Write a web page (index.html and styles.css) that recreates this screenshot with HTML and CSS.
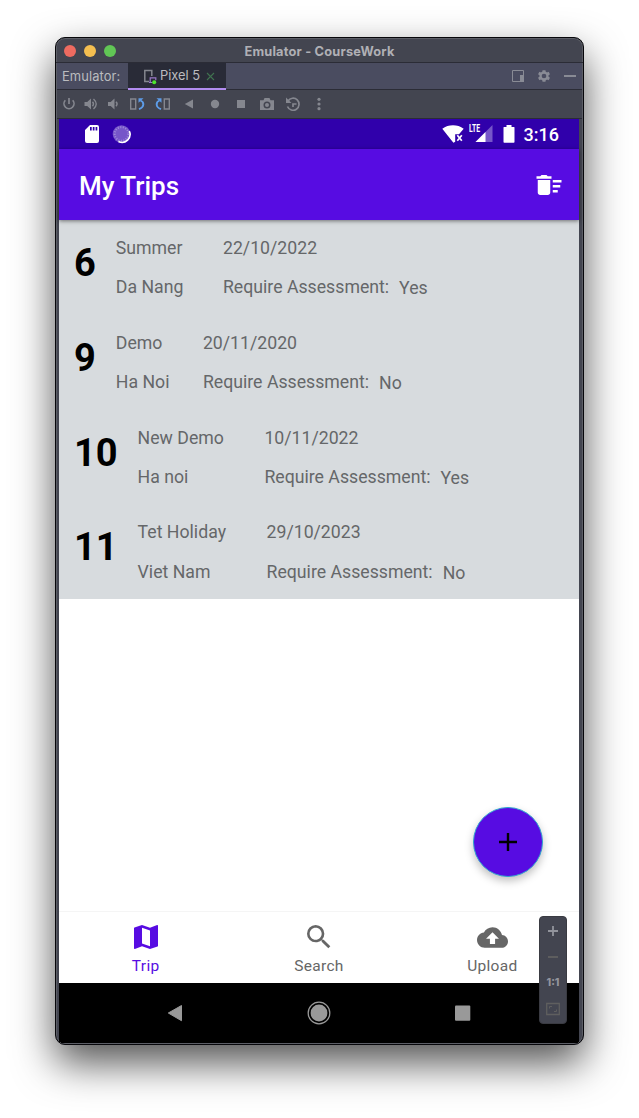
FILE: index.html
```html
<!DOCTYPE html>
<html lang="en">
<head>
<meta charset="utf-8">
<title>Emulator - CourseWork</title>
<link rel="stylesheet" href="styles.css">
</head>
<body>
<main class="window">
  <header class="titlebar">
    <div class="lights"><i class="light red"></i><i class="light yellow"></i><i class="light green"></i></div>
    <span class="window-title">Emulator - CourseWork</span>
  </header>
  <div class="tabs">
    <span class="tabs-label">Emulator:</span>
    <div class="tab">
      <svg class="tab-device" width="14" height="16" viewBox="0 0 14 16"><path d="M6 12.500H1.800V1.500h7V7" fill="none" stroke="#85878f" stroke-width="1.500"/><path d="M7.200 13V8.800h5.600v2.500M6 13.500h3" fill="none" stroke="#9a78c8" stroke-width="1.200"/><circle cx="11.200" cy="13.200" r="2" fill="#4ee62e"/></svg>
      <span class="tab-name">Pixel 5</span>
      <svg class="tab-close" width="9" height="9" viewBox="0 0 9 9"><path d="M1 1l7 7M8 1L1 8" stroke="#40724f" stroke-width="1.100"/></svg>
    </div>
    <div class="tab-actions">
      <svg width="14" height="14" viewBox="0 0 14 14"><path d="M1.500 1.500h11v11h-11z" fill="none" stroke="#898b95"/><path d="M9 6h4v7H9z" fill="#898b95"/></svg>
      <svg width="14" height="14" viewBox="0 0 24 24"><path fill="#898b95" fill-rule="evenodd" d="M19.800 13.200c.1-.8.1-1.600 0-2.400l2.400-1.900-2.300-4-2.800 1.200a9 9 0 0 0-2.100-1.200L14.500 2h-5L9 4.900a9 9 0 0 0-2.100 1.200L4.100 4.900l-2.300 4 2.400 1.900c-.1.800-.1 1.600 0 2.400l-2.400 1.900 2.300 4 2.800-1.200c.7.500 1.400.9 2.100 1.200l.5 2.900h5l.5-2.900c.8-.3 1.500-.7 2.100-1.200l2.800 1.200 2.300-4zM12 16a4 4 0 1 1 0-8 4 4 0 0 1 0 8z"/></svg>
      <svg width="14" height="14" viewBox="0 0 14 14"><path d="M1 6h12v2H1z" fill="#898b95"/></svg>
    </div>
  </div>
  <div class="toolbar">
    <div class="tools-audio">
      <svg width="20" height="20" viewBox="0 0 20 20"><path d="M10 4v6M6.300 6.300a5 5 0 1 0 7.400 0" fill="none" stroke="#85878f" stroke-width="1.700"/></svg>
      <svg width="20" height="20" viewBox="0 0 20 20"><path d="M3.500 8h2.700L10 4.500v11L6.200 12H3.500z" fill="#85878f"/><path d="M11.500 7.800q2 2.200 0 4.400M12.500 5q5.500 5 0 10" fill="none" stroke="#85878f" stroke-width="1.400"/></svg>
      <svg width="20" height="20" viewBox="0 0 20 20"><path d="M5 8h2.700l3.800-3.500v11L7.700 12H5z" fill="#85878f"/><path d="M13 7.800q2.200 2.200 0 4.400" fill="none" stroke="#85878f" stroke-width="1.400"/></svg>
    </div>
    <div class="tools-device">
      <svg width="20" height="20" viewBox="0 0 20 20"><path d="M3.700 5h5v10h-5z" fill="none" stroke="#85878f" stroke-width="1.400"/><path d="M12 15.200c5.500-2 5.500-7 1.500-8.700" fill="none" stroke="#5d9ce8" stroke-width="1.900"/><path d="M11.500 4.200h5l-5 4.500z" fill="#5d9ce8"/></svg>
      <svg width="20" height="20" viewBox="0 0 20 20"><path d="M11.300 5h5v10h-5z" fill="none" stroke="#85878f" stroke-width="1.400"/><path d="M8 15.200c-5.500-2-5.500-7-1.500-8.700" fill="none" stroke="#5d9ce8" stroke-width="1.900"/><path d="M8.500 4.200h-5l5 4.500z" fill="#5d9ce8"/></svg>
      <svg width="20" height="20" viewBox="0 0 20 20"><path d="M14 5.500v9L5.800 10z" fill="#85878f"/></svg>
      <svg width="20" height="20" viewBox="0 0 20 20"><circle cx="10" cy="10" r="4.200" fill="#85878f"/></svg>
      <svg width="20" height="20" viewBox="0 0 20 20"><path d="M6 6h8v8H6z" fill="#85878f"/></svg>
      <svg width="20" height="20" viewBox="0 0 20 20"><path fill="#85878f" fill-rule="evenodd" d="M3 6.300h3.500L7.500 4h5l1 2.300H17V16H3zM10 7.500a3.500 3.500 0 1 0 0 7 3.500 3.500 0 0 0 0-7z"/><circle cx="10" cy="11" r="2" fill="#85878f"/></svg>
      <svg width="20" height="20" viewBox="0 0 20 20"><path d="M5 7a6 6 0 1 1-.5 5.500M10 13V10h3.500" fill="none" stroke="#85878f" stroke-width="1.700"/><path d="M3 3.500V9h5.500z" fill="#85878f"/></svg>
      <svg width="20" height="20" viewBox="0 0 20 20" fill="#85878f"><circle cx="10" cy="5.300" r="1.600"/><circle cx="10" cy="10" r="1.600"/><circle cx="10" cy="14.700" r="1.600"/></svg>
    </div>
  </div>

  <section class="screen">
    <div class="status">
      <div class="status-left">
        <svg width="16" height="20" viewBox="0 0 16 20"><path fill="#fff" fill-rule="evenodd" d="M6 1h7q2 0 2 2v14q0 2-2 2H3q-2 0-2-2V6zM6 3v3.500h1.700V3zm2.800 0v3.500h1.700V3zm2.800 0v3.500h1.700V3z"/></svg>
        <svg width="20" height="20" viewBox="0 0 20 20"><circle cx="9.500" cy="10" r="8.800" fill="#7656c9"/><circle cx="9.500" cy="10" r="6.800" fill="none" stroke="#a18bdb" stroke-width="2" stroke-dasharray="1 1.550"/><path d="M17.300 7A8 8 0 0 1 6.500 17.500" fill="none" stroke="#fff" stroke-width="1.600"/></svg>
      </div>
      <div class="status-right">
        <svg width="24" height="20" viewBox="0 0 24 20"><path fill="#fff" d="M1.300 4.700C7.500.2 16.500.2 22.700 4.700L18 10.200h-3.800v7.600l-1.800 1z"/><path d="M16.300 11.300l4.500 5.500M20.800 11.300l-4.500 5.500" stroke="#fff" stroke-width="1.700"/></svg>
        <div class="cell"><span class="lte">LTE</span><svg width="18" height="18" viewBox="0 0 18 18"><path d="M17.500 0v17H.5z" fill="#7656c9"/><path d="M10.500 7v10H.5z" fill="#fff"/></svg></div>
        <svg width="12" height="20" viewBox="0 0 12 20"><path fill="#fff" d="M3.500 1h5v2H11q.5 0 .5.600V18q0 .800-.800.800H1.300Q.5 18.800.5 18V3.600Q.5 3 1 3h2.500z"/></svg>
        <span class="clock">3:16</span>
      </div>
    </div>
    <div class="appbar">
      <h1 class="app-title">My Trips</h1>
      <svg class="delete-all" width="30" height="30" viewBox="0 0 24 24"><path fill="#fff" d="M15 16h4v2h-4zm0-8h7v2h-7zm0 4h6v2h-6zM3 18c0 1.100.9 2 2 2h6c1.100 0 2-.9 2-2V8H3zM14 5h-3l-1-1H6L5 5H2v2h12z"/></svg>
    </div>
    <div class="trips">
      <article class="trip"><b class="trip-id">6</b><div class="place"><span>Summer</span><span class="city">Da Nang</span></div><div class="detail"><span>22/10/2022</span><span class="assess">Require Assessment:<em>Yes</em></span></div></article>
      <article class="trip"><b class="trip-id">9</b><div class="place"><span>Demo</span><span class="city">Ha Noi</span></div><div class="detail"><span>20/11/2020</span><span class="assess">Require Assessment:<em>No</em></span></div></article>
      <article class="trip"><b class="trip-id">10</b><div class="place"><span>New Demo</span><span class="city">Ha noi</span></div><div class="detail"><span>10/11/2022</span><span class="assess">Require Assessment:<em>Yes</em></span></div></article>
      <article class="trip"><b class="trip-id">11</b><div class="place"><span>Tet Holiday</span><span class="city">Viet Nam</span></div><div class="detail"><span>29/10/2023</span><span class="assess">Require Assessment:<em>No</em></span></div></article>
    </div>
    <div class="blank"></div>
    <nav class="bottom-nav">
      <div class="nav-item active"><svg width="32" height="32" viewBox="0 0 24 24"><path fill="currentColor" d="M20.500 3l-.160.030L15 5.100 9 3 3.360 4.900c-.210.070-.360.250-.360.480V20.500c0 .280.220.500.500.500l.160-.030L9 18.900l6 2.100 5.640-1.900c.210-.070.360-.250.360-.480V3.500c0-.280-.220-.500-.500-.500zM15 19l-6-2.110V5l6 2.110V19z"/></svg><span>Trip</span></div>
      <div class="nav-item"><svg width="32" height="32" viewBox="0 0 24 24"><path fill="currentColor" d="M15.500 14h-.790l-.280-.270A6.470 6.470 0 0 0 16 9.500 6.500 6.500 0 1 0 9.500 16c1.610 0 3.090-.590 4.230-1.570l.270.280v.790l5 4.990L20.490 19l-4.990-5zm-6 0C7.010 14 5 11.990 5 9.500S7.010 5 9.500 5 14 7.010 14 9.500 11.990 14 9.500 14z"/></svg><span>Search</span></div>
      <div class="nav-item upload"><svg width="31" height="31" viewBox="0 0 24 24"><path fill="currentColor" d="M19.350 10.040C18.670 6.590 15.640 4 12 4 9.110 4 6.600 5.640 5.350 8.040 2.340 8.360 0 10.910 0 14c0 3.310 2.690 6 6 6h13c2.760 0 5-2.240 5-5 0-2.640-2.050-4.780-4.650-4.960zM14 13v4h-4v-4H7l5-5 5 5h-3z"/></svg><span>Upload</span></div>
    </nav>
    <div class="system-nav">
      <svg width="36" height="36" viewBox="0 0 36 36"><path d="M24.500 10.500v15.200L11.300 18z" fill="#999" stroke="#999" stroke-linejoin="round"/></svg>
      <svg width="36" height="36" viewBox="0 0 36 36"><circle cx="18" cy="18" r="10.800" fill="none" stroke="#999" stroke-width="1.300"/><circle cx="18" cy="18" r="8.400" fill="#999"/></svg>
      <svg width="36" height="36" viewBox="0 0 36 36"><rect x="10" y="10.500" width="15.300" height="15.200" rx="1" fill="#999"/></svg>
    </div>
    <button class="fab" aria-label="Add trip"><svg width="20" height="20" viewBox="0 0 20 20"><path d="M10 1v18M1 10h18" stroke="#000" stroke-width="2.400"/></svg></button>
    <div class="zoom-panel">
      <svg width="14" height="14" viewBox="0 0 14 14"><path d="M7 2v10M2 7h10" stroke="#92949c" stroke-width="1.800"/></svg>
      <svg width="14" height="14" viewBox="0 0 14 14"><path d="M2 7h10" stroke="#5f5f5f" stroke-width="1.900"/></svg>
      <span class="ratio">1:1</span>
      <svg width="14" height="14" viewBox="0 0 14 14"><path d="M.7 1.500h12.600v11H.7z" fill="none" stroke="#5f5f5f" stroke-width="1.300"/><path d="M3.500 6.500V4.500H6M10.500 7.500v2H8" fill="none" stroke="#5f5f5f"/></svg>
    </div>
  </section>
</main>
</body>
</html>
```
FILE: styles.css
```css
* { box-sizing: border-box; }
body {
  margin: 0;
  width: 639px;
  height: 1118px;
  padding: 37px 0 0 55px;
  background: #fff;
  overflow: hidden;
  font-family: Roboto, sans-serif;
}
svg { display: block; flex: none; }

.window {
  width: 529px;
  height: 1008px;
  border: 1px solid #07070b;
  border-radius: 10px;
  background: #434550;
  box-shadow: 0 18px 40px rgba(0, 0, 0, .68), inset 0 0 0 1px #5c5e66;
  display: flex;
  flex-direction: column;
  overflow: hidden;
  font-family: Inter, sans-serif;
}
.titlebar {
  height: 25px;
  display: grid;
  grid-template-columns: 100px 1fr 100px;
  align-items: center;
  padding-top: 2px;
  border-bottom: 1px solid #2b2c36;
}
.lights { display: flex; gap: 8px; padding-left: 8px; }
.light { width: 12px; height: 12px; border-radius: 50%; }
.red { background: #ee6b60; }
.yellow { background: #f5bf50; }
.green { background: #61c655; }
.window-title { text-align: center; font-size: 12.8px; font-weight: 700; letter-spacing: .2px; color: #b0b0b5; white-space: nowrap; }

.tabs {
  height: 27px;
  margin: 0 1px;
  display: flex;
  align-items: center;
  background: #4a4c60;
  border-bottom: 1px solid #2b2c36;
}
.tabs-label { width: 71px; padding-left: 5px; font-size: 12.9px; letter-spacing: .1px; color: #bbbcbf; }
.tab {
  align-self: stretch;
  margin-bottom: -1px;
  width: 98px;
  display: flex;
  align-items: center;
  padding-left: 15px;
  background: #292b37;
  border-bottom: 2px solid #b28cf0;
}
.tab-device { margin-top: 2px; }
.tab-name { margin-left: 3px; width: 46px; font-size: 12.9px; color: #bbbcbf; white-space: nowrap; }
.tab-close { margin: 1px 0 0; }
.tab-actions { display: flex; gap: 12px; margin-left: auto; padding-right: 5px; }

.toolbar {
  height: 29px;
  display: flex;
  align-items: center;
  gap: 4px;
  padding: 0 0 1px 2px;
  border-bottom: 1px solid #2b2c36;
  margin: 0 1px;
}
.tools-audio { display: flex; gap: 2px; }
.tools-device { display: flex; gap: 6px; }

.screen {
  position: relative;
  width: 520px;
  height: 924px;
  margin-left: 3px;
  display: flex;
  flex-direction: column;
  background: #fff;
  font-family: Roboto, sans-serif;
}
.status {
  height: 30px;
  display: flex;
  justify-content: space-between;
  align-items: center;
  background: #3000ab;
  color: #fff;
}
.status-left { display: flex; gap: 12px; padding-left: 25px; }
.status-right { display: flex; align-items: center; padding-right: 20px; }
.cell { display: flex; align-items: center; margin: 0 10px 0 4px; }
.lte { width: 6px; font: 700 10px/10px Roboto, sans-serif; transform: scaleX(.68); transform-origin: left; margin-top: -10px; }
.clock { width: 36px; margin-left: 8px; font-size: 18px; font-weight: 500; text-align: right; padding-top: 1px; }
.appbar {
  position: relative;
  z-index: 1;
  height: 71px;
  display: flex;
  align-items: center;
  justify-content: space-between;
  padding: 1px 15px 0 20px;
  background: #570ce2;
  color: #fff;
  box-shadow: 0 1px 4px rgba(0, 0, 0, .5);
}
.app-title { margin: 0; padding-top: 2px; font-size: 26px; font-weight: 500; }

.trips { height: 379px; background: #d7dbde; }
.trip { height: 94.75px; display: flex; padding: 16px 0 0 15px; color: #656769; font-size: 17.7px; line-height: 24px; }
.trip-id { margin-right: 20px; padding-top: 3px; font-size: 38px; line-height: 48px; color: #000; font-weight: 700; }
.place, .detail { display: flex; flex-direction: column; gap: 15.300px; white-space: nowrap; }
.place { margin-right: 40.500px; }
.city { width: 0; }
.assess em { display: inline-block; margin-left: 10px; font-style: normal; transform: translateY(1px); }

.blank { height: 312px; }
.bottom-nav {
  height: 72px;
  display: grid;
  grid-template-columns: repeat(3, 1fr);
  border-top: 1px solid #f5f5f5;
  background: #fff;
}
.nav-item { display: flex; flex-direction: column; align-items: center; padding-top: 9px; color: #666; font-size: 15.5px; line-height: 20px; letter-spacing: .3px; }
.nav-item span { margin-top: 3px; }
.upload svg { margin: 1px 0 0; }
.upload span { margin-top: 3px; }
.active { color: #570ce2; }
.system-nav { height: 60px; display: flex; justify-content: center; align-items: center; gap: 108px; background: #000; }

.fab {
  position: absolute;
  right: 36px;
  top: 687.500px;
  width: 70px;
  height: 70px;
  padding: 0;
  border: 1px solid #2fa5cf;
  border-radius: 50%;
  background: #570ce2;
  display: grid;
  place-items: center;
  box-shadow: 0 4px 9px rgba(0, 0, 0, .25);
}
.zoom-panel {
  position: absolute;
  right: 12px;
  top: 797px;
  width: 28px;
  height: 108px;
  padding: 7px 0;
  border-radius: 4px;
  background: #434550;
  border: 1px solid #3a3b42;
  display: flex;
  flex-direction: column;
  align-items: center;
  gap: 12px;
}
.ratio { height: 14px; font: 800 10.500px/14px Inter, sans-serif; color: #92949c; }
```
